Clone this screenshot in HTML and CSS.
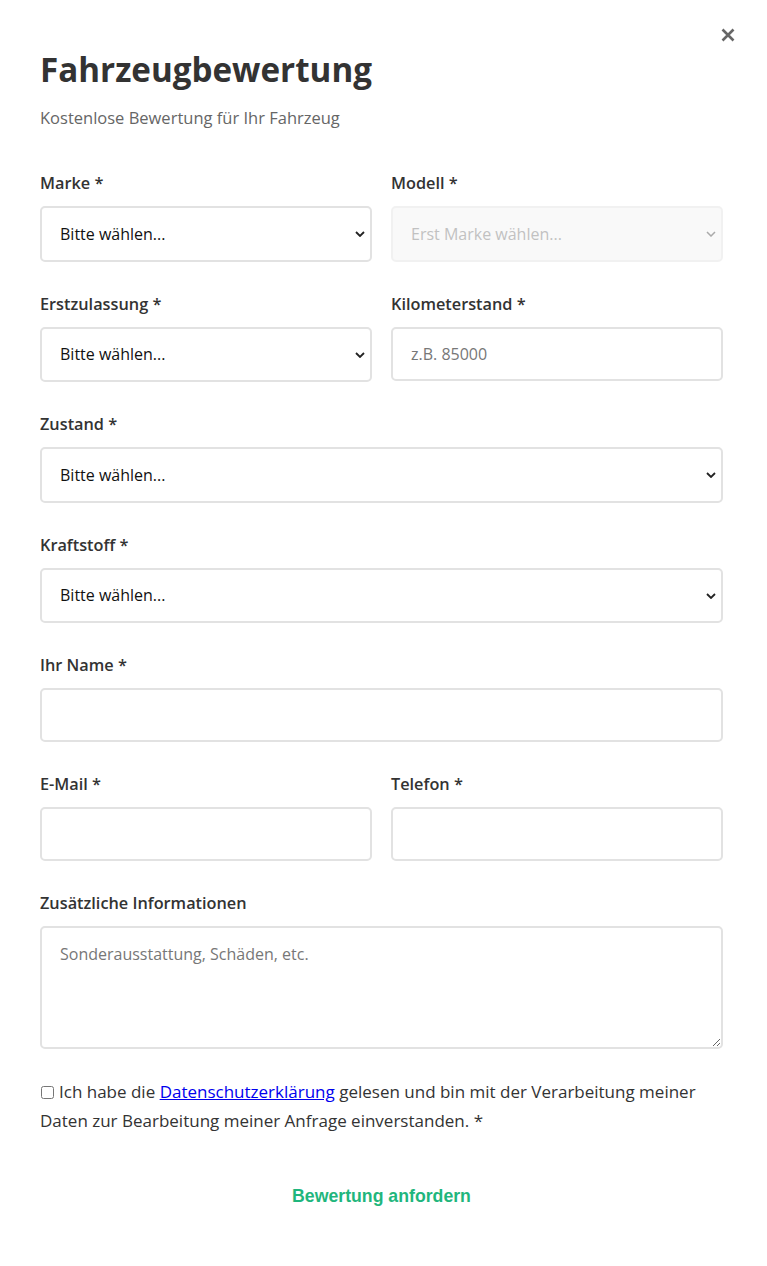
FILE: index.html
```html
<!DOCTYPE html>
<html lang="de">
<head>
<meta charset="utf-8">
<title>Fahrzeugbewertung</title>
<link rel="stylesheet" href="styles.css">
</head>
<body>
<div class="modal">
  <button class="close" type="button" aria-label="Schließen">
    <svg viewBox="0 0 16 16" width="16" height="16"><path d="M2.5 2.5 L13.5 13.5 M13.5 2.5 L2.5 13.5" stroke="#666" stroke-width="2.6" stroke-linecap="butt" fill="none"/></svg>
  </button>
  <h2 class="title">Fahrzeugbewertung</h2>
  <p class="subtitle">Kostenlose Bewertung für Ihr Fahrzeug</p>

  <form class="form">
    <div class="row">
      <div class="group">
        <label class="label">Marke *</label>
        <div class="select-wrap">
          <select class="control select"><option>Bitte wählen...</option></select>
          <svg class="chev" viewBox="0 0 10 6" width="10" height="6"><path d="M1 1 L5 5 L9 1" stroke="#222" stroke-width="1.8" fill="none"/></svg>
        </div>
      </div>
      <div class="group">
        <label class="label">Modell *</label>
        <div class="select-wrap">
          <select class="control select" disabled><option>Erst Marke wählen...</option></select>
          <svg class="chev" viewBox="0 0 10 6" width="10" height="6"><path d="M1 1 L5 5 L9 1" stroke="#aaa" stroke-width="1.5" fill="none"/></svg>
        </div>
      </div>
    </div>

    <div class="row">
      <div class="group">
        <label class="label">Erstzulassung *</label>
        <div class="select-wrap">
          <select class="control select"><option>Bitte wählen...</option></select>
          <svg class="chev" viewBox="0 0 10 6" width="10" height="6"><path d="M1 1 L5 5 L9 1" stroke="#222" stroke-width="1.8" fill="none"/></svg>
        </div>
      </div>
      <div class="group">
        <label class="label">Kilometerstand *</label>
        <input class="control input" type="text" placeholder="z.B. 85000">
      </div>
    </div>

    <div class="group">
      <label class="label">Zustand *</label>
      <div class="select-wrap">
        <select class="control select"><option>Bitte wählen...</option></select>
        <svg class="chev" viewBox="0 0 10 6" width="10" height="6"><path d="M1 1 L5 5 L9 1" stroke="#222" stroke-width="1.8" fill="none"/></svg>
      </div>
    </div>

    <div class="group">
      <label class="label">Kraftstoff *</label>
      <div class="select-wrap">
        <select class="control select"><option>Bitte wählen...</option></select>
        <svg class="chev" viewBox="0 0 10 6" width="10" height="6"><path d="M1 1 L5 5 L9 1" stroke="#222" stroke-width="1.8" fill="none"/></svg>
      </div>
    </div>

    <div class="group">
      <label class="label">Ihr Name *</label>
      <input class="control input" type="text">
    </div>

    <div class="row">
      <div class="group">
        <label class="label">E-Mail *</label>
        <input class="control input" type="email">
      </div>
      <div class="group">
        <label class="label">Telefon *</label>
        <input class="control input" type="tel">
      </div>
    </div>

    <div class="group">
      <label class="label">Zusätzliche Informationen</label>
      <textarea class="control textarea" placeholder="Sonderausstattung, Schäden, etc."></textarea>
    </div>

    <p class="consent"><input type="checkbox" class="check">Ich habe die <a href="#">Datenschutzerklärung</a> gelesen und bin mit der Verarbeitung meiner Daten zur Bearbeitung meiner Anfrage einverstanden. *</p>

    <button class="submit" type="button">Bewertung anfordern</button>
  </form>
</div>
</body>
</html>
```

FILE: styles.css
```css
html, body {
  margin: 0;
  padding: 0;
  background: #fff;
}
body {
  font-family: "Open Sans", "Noto Sans", sans-serif;
  color: #333;
}
.modal {
  position: relative;
  padding: 50px 44px 40px 40px;
  box-sizing: border-box;
  width: 767px;
}
.close {
  position: absolute;
  top: 27px;
  right: 31px;
  width: 16px;
  height: 16px;
  padding: 0;
  border: 0;
  background: none;
  display: flex;
}
.title {
  margin: 0;
  font-size: 33.2px;
  line-height: 40px;
  font-weight: 700;
  color: #333;
}
.subtitle {
  margin: 16px 0 0;
  font-size: 16.5px;
  line-height: 24px;
  color: #666;
}
.form {
  margin-top: 41px;
}
.row {
  display: grid;
  grid-template-columns: 1fr 1fr;
  column-gap: 19px;
}
.group {
  display: flex;
  flex-direction: column;
  margin-bottom: 30px;
}
.label {
  font-size: 16.3px;
  line-height: 24px;
  font-weight: 600;
  color: #333;
  margin-bottom: 11px;
}
.control {
  box-sizing: border-box;
  width: 100%;
  border: 2px solid #e2e2e2;
  border-radius: 5px;
  background: #fff;
  font-family: inherit;
  font-size: 16px;
  color: #111;
  padding: 0 18px;
  outline: none;
}
.select-wrap {
  position: relative;
}
.select {
  appearance: none;
  -webkit-appearance: none;
  height: 55.5px;
}
.select:disabled {
  background: #f7f7f7;
  color: #a8a8a8;
  border-color: #ececec;
}
.chev {
  position: absolute;
  right: 7px;
  top: 25px;
  pointer-events: none;
}
.input {
  height: 54px;
}
.input::placeholder, .textarea::placeholder {
  color: #777;
}
.textarea {
  height: 123px;
  padding: 14px 18px;
  resize: vertical;
  line-height: 24px;
  display: block;
}
.consent {
  margin: -2px 0 0;
  font-size: 17px;
  line-height: 29px;
  color: #333;
}
.consent a {
  color: #0000ee;
  text-decoration: underline;
}
.check {
  margin: 0 5px 0 1px;
  width: 13px;
  height: 13px;
  vertical-align: -1px;
}
.submit {
  display: block;
  width: 100%;
  margin-top: 35px;
  padding: 16px 0;
  border: 0;
  background: #fff;
  font-family: "Liberation Sans", Arial, sans-serif;
  font-weight: 700;
  font-size: 17.7px;
  line-height: 20px;
  color: #1fb67d;
  text-align: center;
}
```
